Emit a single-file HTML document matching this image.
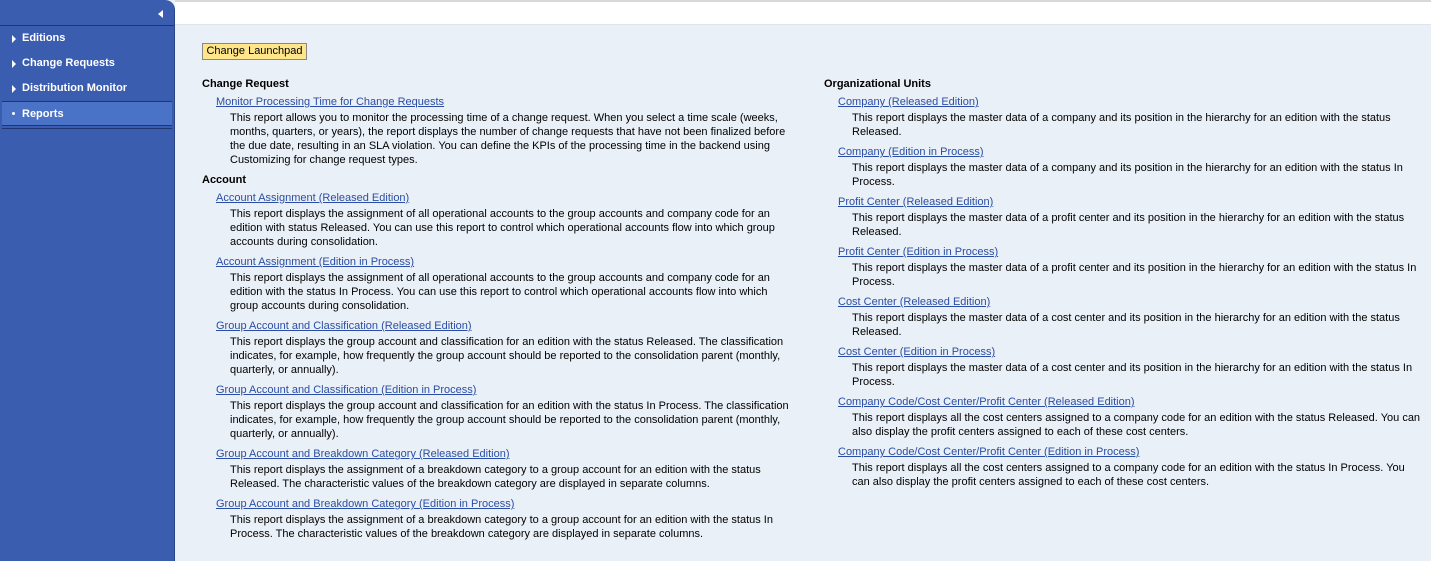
<!DOCTYPE html>
<html><head><style>
*{margin:0;padding:0;box-sizing:border-box}
body{width:1431px;height:561px;overflow:hidden;background:#eaf0f7;font-family:"Liberation Sans",Tahoma,sans-serif;font-size:11px;color:#000;position:relative}
#side{position:absolute;left:0;top:0;width:175px;height:561px;background:#3b5daf;border-right:1px solid #2a4487;border-top-right-radius:10px}
#side .hd{height:26px;border-bottom:1px solid #1f3670;position:relative}
#side .hd:after{content:"";position:absolute;left:158px;top:10px;border-right:5px solid #fff;border-top:4px solid transparent;border-bottom:4px solid transparent}
.it{height:25px;line-height:25px;color:#fff;font-weight:bold;padding-left:22px;position:relative}
.it:before{content:"";position:absolute;left:12px;top:9px;border-left:4px solid #fff;border-top:4px solid transparent;border-bottom:4px solid transparent}
.sel{background:#4a72c6;border-top:1px solid #1f3670;border-bottom:1px solid #1f3670;margin:0 2px;height:25px;line-height:24px;padding-left:20px}
.sel:before{left:10px;top:10px;border:none;width:3px;height:3px;background:#fff;border-radius:2px}
.sep{margin:2px 2px 0;border-top:1px solid #1f3670}
#top{position:absolute;left:175px;top:0;right:0;height:25px;background:#fff;border-top:2px solid #d8d8d8;border-bottom:1px solid #dfe5ec}
#btn{position:absolute;left:202px;top:43px;width:105px;height:17px;background:#ffe68a;border:1px solid #888;line-height:15px;text-align:center;font-size:11px}
.col{position:absolute;top:75px}
.h{font-weight:bold;line-height:18px}
.l{line-height:18px;padding-left:14px}
.l a{color:#2a4ea6;text-decoration:underline}
.t{line-height:14px;padding-left:28px;margin-bottom:4px;white-space:nowrap}
</style></head><body>
<div id="side">
<div class="hd"></div>
<div class="it">Editions</div>
<div class="it">Change Requests</div>
<div class="it">Distribution Monitor</div>
<div class="it sel">Reports</div>
<div class="sep"></div>
</div>
<div id="top"></div>
<div id="btn">Change Launchpad</div>
<div class="col" style="left:202px">
<div class="h">Change Request</div>
<div class="l"><a>Monitor Processing Time for Change Requests</a></div>
<div class="t">This report allows you to monitor the processing time of a change request. When you select a time scale (weeks,<br>months, quarters, or years), the report displays the number of change requests that have not been finalized before<br>the due date, resulting in an SLA violation. You can define the KPIs of the processing time in the backend using<br>Customizing for change request types.</div>
<div class="h">Account</div>
<div class="l"><a>Account Assignment (Released Edition)</a></div>
<div class="t">This report displays the assignment of all operational accounts to the group accounts and company code for an<br>edition with status Released. You can use this report to control which operational accounts flow into which group<br>accounts during consolidation.</div>
<div class="l"><a>Account Assignment (Edition in Process)</a></div>
<div class="t">This report displays the assignment of all operational accounts to the group accounts and company code for an<br>edition with the status In Process. You can use this report to control which operational accounts flow into which<br>group accounts during consolidation.</div>
<div class="l"><a>Group Account and Classification (Released Edition)</a></div>
<div class="t">This report displays the group account and classification for an edition with the status Released. The classification<br>indicates, for example, how frequently the group account should be reported to the consolidation parent (monthly,<br>quarterly, or annually).</div>
<div class="l"><a>Group Account and Classification (Edition in Process)</a></div>
<div class="t">This report displays the group account and classification for an edition with the status In Process. The classification<br>indicates, for example, how frequently the group account should be reported to the consolidation parent (monthly,<br>quarterly, or annually).</div>
<div class="l"><a>Group Account and Breakdown Category (Released Edition)</a></div>
<div class="t">This report displays the assignment of a breakdown category to a group account for an edition with the status<br>Released. The characteristic values of the breakdown category are displayed in separate columns.</div>
<div class="l"><a>Group Account and Breakdown Category (Edition in Process)</a></div>
<div class="t">This report displays the assignment of a breakdown category to a group account for an edition with the status In<br>Process. The characteristic values of the breakdown category are displayed in separate columns.</div>
</div>
<div class="col" style="left:824px">
<div class="h">Organizational Units</div>
<div class="l"><a>Company (Released Edition)</a></div>
<div class="t">This report displays the master data of a company and its position in the hierarchy for an edition with the status<br>Released.</div>
<div class="l"><a>Company (Edition in Process)</a></div>
<div class="t">This report displays the master data of a company and its position in the hierarchy for an edition with the status In<br>Process.</div>
<div class="l"><a>Profit Center (Released Edition)</a></div>
<div class="t">This report displays the master data of a profit center and its position in the hierarchy for an edition with the status<br>Released.</div>
<div class="l"><a>Profit Center (Edition in Process)</a></div>
<div class="t">This report displays the master data of a profit center and its position in the hierarchy for an edition with the status In<br>Process.</div>
<div class="l"><a>Cost Center (Released Edition)</a></div>
<div class="t">This report displays the master data of a cost center and its position in the hierarchy for an edition with the status<br>Released.</div>
<div class="l"><a>Cost Center (Edition in Process)</a></div>
<div class="t">This report displays the master data of a cost center and its position in the hierarchy for an edition with the status In<br>Process.</div>
<div class="l"><a>Company Code/Cost Center/Profit Center (Released Edition)</a></div>
<div class="t">This report displays all the cost centers assigned to a company code for an edition with the status Released. You can<br>also display the profit centers assigned to each of these cost centers.</div>
<div class="l"><a>Company Code/Cost Center/Profit Center (Edition in Process)</a></div>
<div class="t">This report displays all the cost centers assigned to a company code for an edition with the status In Process. You<br>can also display the profit centers assigned to each of these cost centers.</div>
</div>
</body></html>
